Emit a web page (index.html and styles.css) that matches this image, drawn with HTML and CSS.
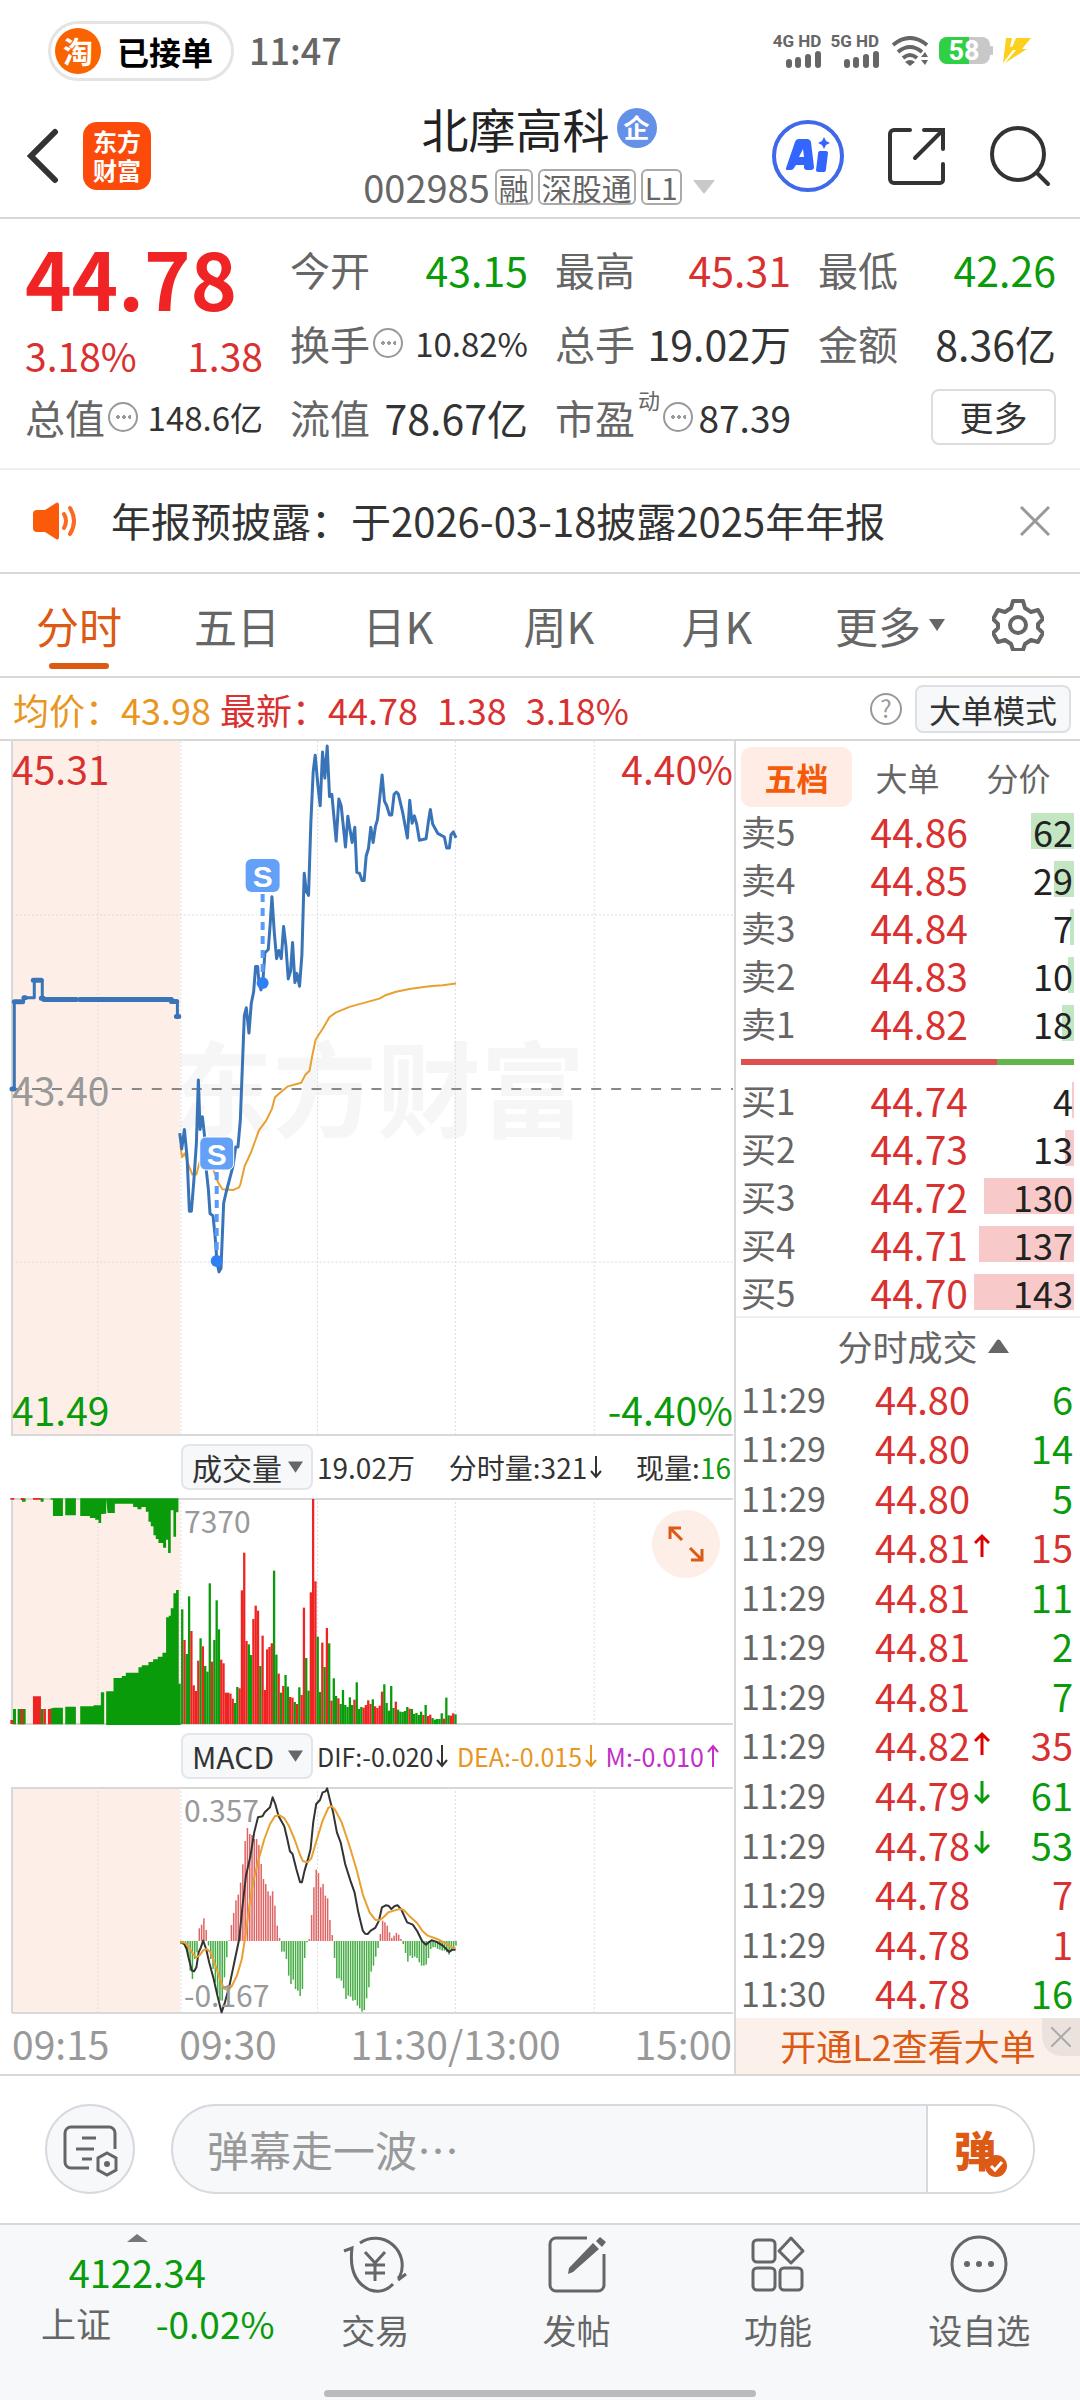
FILE: index.html
```html
<!DOCTYPE html>
<html lang="zh-CN">
<head>
<meta charset="utf-8">
<meta name="viewport" content="width=device-width, initial-scale=1">
<title>北摩高科 002985</title>
<link rel="stylesheet" href="styles.css">
</head>
<body>
<div class="app">

  <div class="status">
    <div class="pill"><span class="pill-logo">淘</span>已接单</div>
    <span class="clock">11:47</span>
    <div class="status-icons">
      <div class="net"><span>4G HD</span><svg width="36" height="17" viewBox="0 0 36 17"><path d="M4 14v-3M13 14v-5M23 14v-8M33 14v-11"/></svg></div>
      <div class="net"><span>5G HD</span><svg width="36" height="17" viewBox="0 0 36 17"><path d="M4 14v-3M13 14v-5M23 14v-8M33 14v-11"/></svg></div>
      <svg class="wifi" width="38" height="30" viewBox="0 0 38 30"><path d="M1 9Q18 -5 35 9M6 16Q18 6 30 16M11 22Q18 16 25 22" fill="none" stroke="#666" stroke-width="4"/><path d="M18 30l-5-4q5-4 10 0zM29 21h7l-3-5zM29 24h7l-3 5z" fill="#666"/></svg>
      <svg width="54" height="30" viewBox="0 0 54 30"><rect x="0" y="1" width="51" height="27" rx="8" fill="#c8c8c8"/><path d="M8 1h22v27H8a8 8 0 0 1-8-8V9a8 8 0 0 1 8-8z" fill="#2fd045"/><rect x="51" y="10" width="3" height="9" rx="1" fill="#c8c8c8"/><text x="25" y="24" text-anchor="middle" class="batt">58</text></svg>
      <svg width="30" height="28" viewBox="0 0 30 28"><path d="M4 1h6L8 10l6-1L1 26zM14 1h15L20 12h5L3 26l11-13-5 0z" fill="#fcd01c"/></svg>
    </div>
  </div>

  <header class="top">
    <div class="top-left">
      <button class="plain" aria-label="返回"><svg width="34" height="56" viewBox="0 0 34 56"><path d="M29 4L5 28l24 24" fill="none" stroke="#333" stroke-width="6" stroke-linecap="round"/></svg></button>
      <span class="brand">东方<br>财富</span>
    </div>
    <div class="top-mid">
      <h1>北摩高科<span class="corp">企</span></h1>
      <div class="code"><span>002985</span><span class="tag">融</span><span class="tag">深股通</span><span class="tag">L1</span><svg width="22" height="14" viewBox="0 0 22 14"><path d="M0 0h22L11 14z" fill="#c8c8c8"/></svg></div>
    </div>
    <div class="top-right">
      <button class="plain" aria-label="AI"><svg width="72" height="72" viewBox="0 0 72 72"><circle cx="36" cy="36" r="34" fill="#fff" stroke="#3f68ea" stroke-width="4"/><path d="M14 48L23 22q1-3 4-3h8q3 0 4 3l3 25q0 3-3 3h-4q-3 0-3-3v-2h-8l-2 3q-1 2-3 2h-3q-3 0-2-2zM27 37h5l-1-8z" fill="#3366ff" fill-rule="evenodd"/><path d="M48 31h6q2 0 2 2l-2 16q0 3-2 3h-6q-2 0-2-2l2-16q0-3 2-3z" fill="#3366ff"/><path d="M52 17l2 4 4 2-4 2-2 4-2-4-4-2 4-2z" fill="#3366ff"/></svg></button>
      <button class="plain" aria-label="分享"><svg width="60" height="60" viewBox="0 0 60 60"><path d="M23 4H7a4 4 0 0 0-4 4v45a4 4 0 0 0 4 4h46a3 3 0 0 0 3-3V38M37 4h19v19M56 4L28 32" fill="none" stroke="#333" stroke-width="4" stroke-linecap="round"/></svg></button>
      <button class="plain" aria-label="搜索"><svg width="62" height="62" viewBox="0 0 62 62"><circle cx="28" cy="29" r="26" fill="none" stroke="#333" stroke-width="4"/><path d="M47 48l11 11" stroke="#333" stroke-width="4" stroke-linecap="round"/></svg></button>
    </div>
  </header>

  <section class="quote">
    <div class="last">
      <strong>44.78</strong>
      <div class="pair up"><span>3.18%</span><span>1.38</span></div>
    </div>
    <div class="cell"><span class="k">今开</span><b class="down">43.15</b></div>
    <div class="cell"><span class="k">最高</span><b class="up">45.31</b></div>
    <div class="cell"><span class="k">最低</span><b class="down">42.26</b></div>
    <div class="cell"><span class="k">换手<i class="dots"></i></span><b class="s">10.82%</b></div>
    <div class="cell"><span class="k">总手</span><b>19.02万</b></div>
    <div class="cell"><span class="k">金额</span><b>8.36亿</b></div>
    <div class="cell"><span class="k">总值<i class="dots"></i></span><b class="s">148.6亿</b></div>
    <div class="cell"><span class="k">流值</span><b>78.67亿</b></div>
    <div class="cell"><span class="k">市盈<sup>动</sup><i class="dots"></i></span><b class="m">87.39</b></div>
    <div class="cell end"><button class="more">更多</button></div>
  </section>

  <section class="notice">
    <svg width="46" height="38" viewBox="0 0 46 38"><path d="M4 8h8L23 1q3-2 3 3v30q0 5-3 3l-11-7H4q-4 0-4-4V12q0-4 4-4z" fill="#fa5a0a"/><path d="M31 12q4 7 0 14M37 6q8 13 0 26" fill="none" stroke="#fa6a20" stroke-width="4" stroke-linecap="round"/></svg>
    <p>年报预披露：于2026-03-18披露2025年年报</p>
    <button class="plain" aria-label="关闭"><svg width="30" height="30" viewBox="0 0 30 30"><path d="M1 1l28 28M29 1L1 29" stroke="#999" stroke-width="3"/></svg></button>
  </section>

  <nav class="tabs">
    <button class="on">分时</button><button>五日</button><button>日K</button><button>周K</button><button>月K</button>
    <button>更多<svg width="16" height="12" viewBox="0 0 16 12"><path d="M0 0h16L8 12z" fill="#666"/></svg></button>
    <button aria-label="设置"><svg width="52" height="52" viewBox="0 0 52 52"><path d="M21 2h10l2 7 6 4 7-2 5 9-5 5v4l5 5-5 9-7-2-6 4-2 6H21l-2-6-6-4-7 2-5-9 5-5v-4l-5-5 5-9 7 2 6-4z" fill="none" stroke="#666" stroke-width="4" stroke-linejoin="round"/><circle cx="26" cy="26" r="8" fill="none" stroke="#666" stroke-width="4"/></svg></button>
  </nav>

  <div class="info">
    <span class="avg">均价：43.98</span>
    <span class="up">最新：44.78</span><span class="up">1.38</span><span class="up">3.18%</span>
    <button class="plain help" aria-label="帮助">?</button>
    <button class="mode">大单模式</button>
  </div>

  <main class="board">
    <div class="charts">
      <div class="chart price">
        <span class="mark">东方财富</span>
        <svg viewBox="0 0 735 695" preserveAspectRatio="none">
          <rect x="12" y="0" width="168" height="695" fill="#fdeee8"/>
          <path class="grid" d="M98 0v695M181 0v695M318 0v695M456 0v695M595 0v695M12 174h722M12 521h722"/>
          <path d="M12 0v695" stroke="#d8d8d8" stroke-width="2"/>
          <path d="M12 694h722" stroke="#d8d8d8" stroke-width="2"/>
          <path d="M12 348h722" stroke="#888" stroke-width="2" stroke-dasharray="10 10"/>
          <g class="lines" transform="translate(0 -11) scale(.3333 .4592)">
            <path class="gold" d="M542 905L547 930 555 922 565 945 578 968 590 968 600 940 615 930 640 955 655 985 668 1000 700 1002 718 996 722 990 735 950 755 918 778 872 800 850 817 825 826 800 838 792 865 776 905 768 918 750 930 742 938 710 948 675 958 663 970 650 990 625 1010 615 1050 603 1080 597 1140 585 1160 577 1190 570 1230 564 1290 558 1330 556 1370 552"/>
            <path class="blue" d="M36 782H43V592H68L74 583H103V545H127V587H515L518 592H533V624"/>
            <path class="blue thick" d="M36 782h6M43 592h25M72 583h4M100 545h24M124 584h6M132 587h60M196 587h34M240 587h75M318 587h197M515 591h16M530 624h7"/>
            <path class="blue" d="M540 878L546 912 554 870 562 930 569 1048 575 1048 582 985 590 900 596 762 601 870 608 842 614 880 620 960 626 1000 631 1053 640 1058 646 1100 652 1160 658 1180 664 1172 672 1030 680 1005 700 950 708 908 715 908 722 850 734 622 740 605 748 660 755 595 762 570 768 515 774 515 778 550 784 566 790 545 796 485 806 478 812 420 817 363 824 440 831 498 838 480 845 498 852 428 859 470 866 542 873 525 879 463 886 550 892 530 900 558 907 490 914 312 920 350 927 360 934 200 941 90 947 55 955 120 962 165 969 48 976 105 983 35 990 145 997 140 1010 242 1018 150 1025 165 1038 255 1045 188 1058 245 1066 212 1072 310 1080 312 1088 328 1094 328 1100 275 1107 258 1114 212 1121 245 1128 210 1134 195 1142 140 1148 98 1155 155 1162 165 1170 185 1177 185 1184 140 1191 135 1197 140 1210 180 1224 235 1231 153 1238 203 1245 187 1252 205 1260 240 1280 237 1287 200 1293 173 1300 205 1315 225 1335 233 1342 257 1350 257 1355 228 1362 222 1370 235"/>
          </g>
          <path d="M263 153v88M217 431v88" stroke="#5a9af8" stroke-width="4" stroke-dasharray="8 6"/>
          <circle cx="263" cy="242" r="6" fill="#2f80f5"/><circle cx="217" cy="520" r="6" fill="#2f80f5"/>
          <rect x="246" y="118" width="34" height="33" rx="6" fill="#63a0f7"/>
          <rect x="200" y="396" width="34" height="33" rx="6" fill="#63a0f7" stroke="#fff"/>
          <text class="s-mark" x="263" y="146" text-anchor="middle">S</text>
          <text class="s-mark" x="217" y="424" text-anchor="middle">S</text>
        </svg>
        <span class="lab tl up">45.31</span><span class="lab tr up">4.40%</span>
        <span class="lab ml">43.40</span>
        <span class="lab bl down">41.49</span><span class="lab br down">-4.40%</span>
      </div>

      <div class="sub-head">
        <button class="pick">成交量<svg width="15" height="12" viewBox="0 0 16 12"><path d="M0 0h16L8 12z" fill="#666"/></svg></button>
        <div class="vals"><span>19.02万</span><span>分时量:321<svg class="arr" width="12" height="24" viewBox="0 0 12 24"><path d="M6 1v21M1 16l5 6 5-6"/></svg></span><span>现量:<em class="down">16</em></span></div>
      </div>
      <div class="chart volume">
        <svg viewBox="0 0 735 227" preserveAspectRatio="none">
          <rect x="12" y="0" width="168" height="226" fill="#fdeee8"/>
          <path class="grid" d="M98 0v226M181 0v226M318 0v226M456 0v226M595 0v226"/>
          <path d="M12 1h722M12 226h722M12 0v226" stroke="#d8d8d8" stroke-width="2"/>
          <g transform="translate(0 -69) scale(.3333)">
            <path fill="#0a9b0a" d="M66 208h11v10H66zM122 208h9v10h-9zM152 208h37v53h-30v-49h-7zM196 208h32v51h-32zM241 208h78v46h-8v1h-7v27h-8v-10h-10v-5h-16v-6h-29zM319 208h217v42h-7v73h-8v-79h-8v128h-8v-40h-6v24h-9v-14h-14v-12h-8v-11h-7v-27h-8v-14h-7v-30h-8v-14h-13v7h-12v-7h-13v-10h-55v28h-22zM39 840h9v46h-9zM53 840h24v46H53zM122 840h8v46h-8zM152 838h7v-2h30v50h-37zM196 833h32v53h-32zM241 832h40v-3h22v-39h10v96h-72zM319 787h22v-40h25v-6h12v-10h38v-16h10v-6h20v-10h14v-8h14v-8h14v-12h11v-106h8v-5h6v-22h8v-45h8v-10h8v281h6v129H319z"/>
            <path fill="#ee2423" d="M31 207h12v5H31zM62 207h10v6H62zM99 207h24v5H99zM31 873h9v12h-9zM62 840h8v46h-8zM99 802h24v84H99zM130 840h8v46h-8zM144 840h10v46h-10z"/>
          </g>
          <g id="volume-bars" transform="translate(0 -69) scale(.3333)"></g>
        </svg>
        <span class="lab sm t181">7370</span>
        <button class="expand" aria-label="全屏"><svg width="36" height="36" viewBox="0 0 36 36"><path d="M14 14L3 3M2 13V2h11M22 22l11 11M34 23v11H23" fill="none" stroke="#dc5a14" stroke-width="3"/></svg></button>
      </div>

      <div class="sub-head">
        <button class="pick">MACD<svg width="15" height="12" viewBox="0 0 16 12"><path d="M0 0h16L8 12z" fill="#666"/></svg></button>
        <div class="vals macd-vals"><span>DIF:-0.020<svg class="arr" width="12" height="24" viewBox="0 0 12 24"><path d="M6 1v21M1 16l5 6 5-6"/></svg></span><span class="avg">DEA:-0.015<svg class="arr" width="12" height="24" viewBox="0 0 12 24"><path d="M6 1v21M1 16l5 6 5-6"/></svg></span><span class="mag">M:-0.010<svg class="arr" width="12" height="24" viewBox="0 0 12 24"><path d="M6 23V2M1 8l5-6 5 6"/></svg></span></div>
      </div>
      <div class="chart macd">
        <svg viewBox="0 0 735 227" preserveAspectRatio="none">
          <rect x="12" y="0" width="168" height="226" fill="#fdeee8"/>
          <path class="grid" d="M98 0v226M181 0v226M318 0v226M456 0v226M595 0v226"/>
          <path d="M12 1h722M12 226h722M12 0v226" stroke="#d8d8d8" stroke-width="2"/>
          <g id="macd-bars" transform="translate(150 -58) scale(.3762 .3333)"></g>
          <g class="lines" transform="translate(150 -58) scale(.3762 .3333)">
            <path class="ink" d="M82 638L92 645 98 660 104 690 112 725 118 727 124 715 130 670 136 655 142 635 150 660 158 700 170 750 180 800 191 850 200 820 212 770 225 700 238 630 246 540 256 440 268 380 278 310 288 265 300 262 306 250 320 235 327 205 334 225 343 262 358 292 366 330 373 367 380 375 390 420 400 460 405 460 412 425 420 395 428 360 435 280 443 225 453 213 460 190 468 187 472 178 480 215 488 250 498 310 508 340 520 405 534 455 545 490 555 550 567 605 573 614 580 615 588 605 600 597 610 575 618 535 628 529 635 530 643 540 652 531 660 529 670 543 685 580 700 587 712 607 725 637 735 647 750 634 762 638 780 650 797 669 805 662 814 662"/>
            <path class="gold" d="M80 638L95 642 105 655 115 675 124 685 132 680 142 664 152 660 160 668 172 700 185 745 197 778 208 784 218 772 232 740 245 690 256 610 265 530 275 460 290 390 305 330 320 285 333 262 345 258 358 268 370 290 385 330 400 378 408 397 420 400 430 388 445 330 460 275 475 237 483 232 492 240 510 278 530 345 550 420 568 500 585 550 600 572 610 574 622 565 635 550 650 545 665 540 675 542 690 560 712 583 725 605 740 620 765 630 790 645 805 655 814 657"/>
          </g>
        </svg>
        <span class="lab sm t181">0.357</span><span class="lab sm b181">-0.167</span>
      </div>
      <div class="axis"><span>09:15</span><span>09:30</span><span>11:30/13:00</span><span>15:00</span></div>
    </div>

    <aside class="side">
      <div class="side-tabs"><button class="on">五档</button><button>大单</button><button>分价</button></div>
      <table class="book sell">
        <tr><th>卖5</th><td>44.86</td><td class="q"><i style="width:43%"></i><span>62</span></td></tr>
        <tr><th>卖4</th><td>44.85</td><td class="q"><i style="width:20%"></i><span>29</span></td></tr>
        <tr><th>卖3</th><td>44.84</td><td class="q"><i style="width:4%"></i><span>7</span></td></tr>
        <tr><th>卖2</th><td>44.83</td><td class="q"><i style="width:6%"></i><span>10</span></td></tr>
        <tr><th>卖1</th><td>44.82</td><td class="q"><i style="width:12%"></i><span>18</span></td></tr>
      </table>
      <div class="ratio"><i style="width:77%"></i></div>
      <table class="book buy">
        <tr><th>买1</th><td>44.74</td><td class="q"><i style="width:2%"></i><span>4</span></td></tr>
        <tr><th>买2</th><td>44.73</td><td class="q"><i style="width:9%"></i><span>13</span></td></tr>
        <tr><th>买3</th><td>44.72</td><td class="q"><i style="width:90%"></i><span>130</span></td></tr>
        <tr><th>买4</th><td>44.71</td><td class="q"><i style="width:95%"></i><span>137</span></td></tr>
        <tr><th>买5</th><td>44.70</td><td class="q"><i style="width:100%"></i><span>143</span></td></tr>
      </table>
      <button class="deal-head">分时成交<svg width="21" height="14" viewBox="0 0 21 14"><path d="M0 14L9 1q1-1 3 0l9 13z" fill="#666"/></svg></button>
      <table class="deals">
        <tr><td>11:29</td><td>44.80</td><td></td><td class="down">6</td></tr>
        <tr><td>11:29</td><td>44.80</td><td></td><td class="down">14</td></tr>
        <tr><td>11:29</td><td>44.80</td><td></td><td class="down">5</td></tr>
        <tr><td>11:29</td><td>44.81</td><td><svg width="16" height="24" viewBox="0 0 16 24"><path d="M8 24V3M1 10l7-7 7 7" stroke="#d00"/></svg></td><td class="up">15</td></tr>
        <tr><td>11:29</td><td>44.81</td><td></td><td class="down">11</td></tr>
        <tr><td>11:29</td><td>44.81</td><td></td><td class="down">2</td></tr>
        <tr><td>11:29</td><td>44.81</td><td></td><td class="down">7</td></tr>
        <tr><td>11:29</td><td>44.82</td><td><svg width="16" height="24" viewBox="0 0 16 24"><path d="M8 24V3M1 10l7-7 7 7" stroke="#d00"/></svg></td><td class="up">35</td></tr>
        <tr><td>11:29</td><td>44.79</td><td><svg width="16" height="24" viewBox="0 0 16 24"><path d="M8 0v21M1 14l7 7 7-7" stroke="#0a9b0a"/></svg></td><td class="down">61</td></tr>
        <tr><td>11:29</td><td>44.78</td><td><svg width="16" height="24" viewBox="0 0 16 24"><path d="M8 0v21M1 14l7 7 7-7" stroke="#0a9b0a"/></svg></td><td class="down">53</td></tr>
        <tr><td>11:29</td><td>44.78</td><td></td><td class="up">7</td></tr>
        <tr><td>11:29</td><td>44.78</td><td></td><td class="up">1</td></tr>
        <tr><td>11:30</td><td>44.78</td><td></td><td class="down">16</td></tr>
      </table>
      <div class="l2"><a href="#l2">开通L2查看大单</a><button class="l2-x" aria-label="关闭"><svg width="20" height="20" viewBox="0 0 20 20"><path d="M0 0l20 20M20 0L0 20" stroke="#aaa" stroke-width="2"/></svg></button></div>
    </aside>
  </main>

  <form class="chat">
    <button type="button" class="round" aria-label="弹幕设置"><svg width="56" height="54" viewBox="0 0 56 54"><path d="M27 44H9a6 6 0 0 1-6-6V9a6 6 0 0 1 6-6h38a6 6 0 0 1 6 6v16" fill="none" stroke="#666" stroke-width="3"/><path d="M20 14h14M14 25h18M20 35h10" stroke="#666" stroke-width="3"/><path d="M45 29l9 5v12l-9 5-9-5V34z" fill="#f6f8fa" stroke="#666" stroke-width="3"/><circle cx="45" cy="40" r="3" fill="#666"/></svg></button>
    <div class="box"><input type="text" aria-label="弹幕" placeholder="弹幕走一波⋯"><button type="button" class="send">弹<svg width="24" height="24" viewBox="0 0 24 24"><circle cx="12" cy="12" r="11" fill="#dc5a14"/><path d="M7 12l4 4 7-8" fill="none" stroke="#fff" stroke-width="3"/></svg></button></div>
  </form>

  <footer class="bottom">
    <div class="index"><svg width="21" height="8" viewBox="0 0 21 8"><path d="M0 8L10 0l11 8z" fill="#777"/></svg><b class="down">4122.34</b><div><span>上证</span><span class="down">-0.02%</span></div></div>
    <button><svg width="66" height="60" viewBox="0 0 66 60"><g fill="none" stroke="#666" stroke-width="3"><path d="M18 9a27 27 0 0 1 40 33l-2 2M2 17l8-3q-4 32 18 42 14 4 23-6M56 46l8-6"/><path d="M23 18l10 11 10-11M33 29v18M23 31h20M23 39h20"/></g></svg>交易</button>
    <button><svg width="60" height="60" viewBox="0 0 60 60"><path d="M40 4H9a6 6 0 0 0-6 6v41a6 6 0 0 0 6 6h42a6 6 0 0 0 6-6V20" fill="none" stroke="#666" stroke-width="3"/><path d="M46 9l6 6-26 23-5 2 1-6zM49 7l4-4 6 5-4 5z" fill="#666"/></svg>发帖</button>
    <button><svg width="60" height="60" viewBox="0 0 60 60"><g fill="none" stroke="#666" stroke-width="3"><rect x="5" y="6" width="22" height="22" rx="4"/><rect x="5" y="34" width="22" height="22" rx="4"/><rect x="32" y="34" width="22" height="22" rx="4"/><path d="M43 4l12 13-12 12-12-12z" stroke-linejoin="round"/></g></svg>功能</button>
    <button><svg width="60" height="60" viewBox="0 0 60 60"><circle cx="30" cy="30" r="27" fill="none" stroke="#666" stroke-width="3"/><g fill="#666"><circle cx="18" cy="30" r="3"/><circle cx="30" cy="30" r="3"/><circle cx="42" cy="30" r="3"/></g></svg>设自选</button>
    <i class="home"></i>
  </footer>
</div>
<script src="script.js"></script>
</body>
</html>
```
FILE: styles.css
```css
* { box-sizing: border-box; }
body { margin: 0; background: #fff; color: #333; font-family: "Noto Sans CJK SC", sans-serif; }
button, input { font: inherit; color: inherit; background: none; border: 0; padding: 0; margin: 0; }
svg { display: block; flex: none; }
i, em { font-style: normal; }
h1, p { margin: 0; font-weight: 400; }
.plain { display: flex; }
.up { color: #d93030; }
.down { color: #0a9b0a; }
.avg { color: #e8961e; }
.mag { color: #c22fc8; }
.app { display: flex; flex-direction: column; min-height: 100vh; }

.status { display: flex; align-items: center; height: 101px; padding: 0 48px; gap: 15px; }
.pill { display: flex; align-items: center; gap: 16px; height: 60px; padding: 0 18px 0 4px; border: 3px solid #e4e4e4; border-radius: 30px; font-size: 32px; line-height: 48px; font-weight: 700; color: #000; }
.pill-logo { width: 46px; height: 46px; border-radius: 50%; background: #fa6400; color: #fff; font-size: 30px; line-height: 44px; text-align: center; }
.clock { font-size: 36px; line-height: 48px; color: #666; font-weight: 500; padding-bottom: 3px; }
.status-icons { display: flex; align-items: center; gap: 9px; margin-left: auto; }
.net { display: flex; flex-direction: column; align-items: flex-end; font: 700 17px/16px Roboto, sans-serif; color: #666; gap: 2px; }
.net path { stroke: #666; stroke-width: 6; stroke-linecap: round; }
.wifi { margin-left: 4px; }
.batt { font: 700 27px Roboto, sans-serif; fill: #fff; }

.top { display: grid; grid-template-columns: 1fr auto 1fr; align-items: center; height: 118px; padding: 0 28px 20px 26px; border-bottom: 2px solid #d8d8d8; }
.top-left, .top-right { display: flex; align-items: center; }
.top-left { gap: 23px; }
.top-right { justify-content: flex-end; gap: 43px; }
.brand { width: 68px; height: 68px; border-radius: 14px; background: #fc4a0a; color: #fff; font-size: 24px; line-height: 29px; font-weight: 700; text-align: center; padding-top: 4px; }
.top-mid { display: flex; flex-direction: column; align-items: center; }
.top-mid h1 { display: flex; align-items: center; gap: 7px; font-size: 47px; line-height: 54px; color: #222; font-weight: 400; margin-bottom: 8px; }
.corp { width: 40px; height: 40px; border-radius: 50%; background: #6590e8; color: #fff; font-size: 26px; line-height: 38px; font-weight: 700; text-align: center; }
.code { display: flex; align-items: center; gap: 5px; font-size: 38px; line-height: 48px; color: #666; }
.tag { height: 36px; border: 2px solid #aaa; border-radius: 6px; padding: 0 2px; font-size: 30px; line-height: 32px; }
.code svg { margin-left: 6px; }

.quote { display: grid; grid-template-columns: 237fr 237fr 235fr 237fr; column-gap: 27px; grid-auto-rows: 74px; height: 251px; padding: 13px 24px 0 25px; border-bottom: 2px solid #eee; }
.last { grid-row: span 2; }
.last strong { display: block; font-size: 79px; line-height: 90px; font-weight: 700; color: #f02424; }
.pair { display: flex; justify-content: space-between; font-size: 39px; line-height: 66px; }
.cell { display: flex; align-items: center; justify-content: space-between; white-space: nowrap; }
.cell b { font-size: 41px; font-weight: 400; }
.cell .s { font-size: 33px; }
.cell .m { font-size: 37px; }
.cell.end { justify-content: flex-end; }
.k { display: flex; align-items: center; gap: 3px; font-size: 40px; color: #666; }
.k sup { align-self: flex-start; font-size: 22px; line-height: 22px; }
.dots { display: flex; align-items: center; justify-content: center; width: 30px; height: 30px; border: 2px solid #999; border-radius: 50%; }
.dots::before { content: ""; width: 16px; height: 4px; background: radial-gradient(circle, #999 2px, transparent 2px) 0 0 / 6px 4px; }
.more { width: 125px; height: 56px; border: 2px solid #ddd; border-radius: 8px; font-size: 34px; line-height: 48px; }

.notice { display: flex; align-items: center; height: 104px; padding: 0 30px 0 33px; gap: 32px; border-bottom: 2px solid #d8d8d8; }
.notice p { flex: 1; font-size: 40px; line-height: 52px; padding-bottom: 2px; }

.tabs { display: grid; grid-template-columns: 158fr 158fr 164fr 158fr 158fr 188fr 96fr; height: 104px; border-bottom: 2px solid #d8d8d8; font-size: 43px; color: #666; }
.tabs button { position: relative; display: flex; align-items: center; justify-content: center; gap: 8px; }
.tabs button:last-child { justify-content: flex-end; padding-right: 36px; }
.tabs .on { color: #dc5a14; }
.tabs .on::after { content: ""; position: absolute; left: 49px; right: 49px; bottom: 7px; height: 6px; border-radius: 3px; background: #dc5a14; }

.info { display: flex; align-items: center; height: 63px; padding: 0 9px 0 13px; gap: 19px; font-size: 36px; line-height: 48px; border-bottom: 2px solid #d8d8d8; white-space: nowrap; }
.info .avg { margin-right: -10px; }
.help { margin-left: auto; justify-content: center; width: 32px; height: 32px; border: 2px solid #999; border-radius: 50%; font-size: 24px; line-height: 26px; color: #999; }
.mode { height: 48px; padding: 0 12px; margin-left: -6px; border: 2px solid #dcdfe4; border-radius: 8px; background: #f6f8fa; font-size: 32px; line-height: 40px; }

.board { display: grid; grid-template-columns: minmax(0, 1fr) 346px; border-bottom: 2px solid #d8d8d8; }
.charts { display: flex; flex-direction: column; }
.chart { position: relative; }
.chart > svg { position: relative; width: 100%; height: 100%; }
.price { height: 695px; }
.volume, .macd { height: 227px; }
.mark { position: absolute; left: 23%; top: 274px; font-size: 104px; line-height: 140px; font-weight: 700; color: #f6f6f6; }
.grid { stroke: #ddd; stroke-width: 1; stroke-dasharray: 2 2; fill: none; }
.lines path { fill: none; vector-effect: non-scaling-stroke; stroke-linejoin: round; }
.lines .blue { stroke: #3a74b8; stroke-width: 3; }
.lines .thick { stroke-width: 5; stroke-linecap: round; }
.lines .gold { stroke: #e8a030; stroke-width: 2; }
.lines .ink { stroke: #333; stroke-width: 2; }
.s-mark { font: 700 30px "Liberation Sans", sans-serif; fill: #fff; }
.lab { position: absolute; font-size: 39px; line-height: 40px; }
.tl, .ml, .bl { left: 12px; }
.tr, .br { right: 1px; }
.tl, .tr { top: 7px; }
.ml { top: 328px; color: #999; }
.bl, .br { bottom: 7px; }
.sm { font-size: 30px; color: #999; }
.t181 { left: 184px; top: 2px; }
.b181 { left: 184px; bottom: 0; }
.sub-head { display: flex; align-items: center; gap: 4px; height: 62px; padding: 0 3px 0 181px; white-space: nowrap; }
.pick { flex: none; display: flex; align-items: center; justify-content: space-between; width: 132px; height: 46px; padding: 0 8px 0 9px; border: 2px solid #e2e5ea; border-radius: 8px; background: #f6f8fa; font-size: 30px; line-height: 36px; }
.vals { flex: 1; display: flex; justify-content: space-between; font-size: 28px; line-height: 40px; }
.vals span { display: flex; align-items: center; gap: 3px; }
.vals em { margin-left: -3px; }
.macd-vals { font-size: 25px; padding-right: 12px; }
.arr path { fill: none; stroke: currentColor; stroke-width: 2; }
.expand { position: absolute; right: 14px; top: 12px; width: 68px; height: 68px; border-radius: 50%; background: #fdeee8; display: flex; align-items: center; justify-content: center; }
.axis { display: grid; grid-template-columns: 168fr 172fr 230fr 153fr; height: 60px; padding: 0 2px 0 12px; font-size: 39px; line-height: 58px; color: #999; white-space: nowrap; }
.axis span:last-child { text-align: right; }

.side { display: flex; flex-direction: column; border-left: 2px solid #d8d8d8; }
.side-tabs { display: grid; grid-template-columns: 111px 111px 111px; height: 60px; margin: 6px 0 0 5px; font-size: 32px; color: #666; }
.side-tabs .on { background: #ffece4; border-radius: 10px; color: #f55a0a; font-weight: 700; }
table { border-collapse: collapse; }
td, th { padding: 0; font-weight: 400; }
.book { width: 333px; margin-left: 5px; table-layout: fixed; line-height: 48px; }
.book tr { height: 48px; }
.book th { text-align: left; font-size: 35px; color: #666; width: 90px; }
.book td { text-align: right; font-size: 39px; color: #d93030; padding-right: 6px; }
.book .q { position: relative; width: 100px; padding-right: 1px; font-size: 36px; color: #222; }
.q span { position: relative; }
.q i { position: absolute; right: 0; top: 6px; height: 36px; }
.sell i { background: #c2e5c2; }
.buy i { background: #f8c9c9; }
.ratio { height: 6px; margin: 12px 6px 11px 5px; background: #62b54a; }
.ratio i { display: block; height: 6px; background: #de4f4f; }
.deal-head { display: flex; align-items: center; justify-content: center; gap: 10px; height: 58px; border-top: 2px solid #eee; font-size: 35px; line-height: 54px; color: #666; padding-left: 30px; }
.deals { flex: 1; width: 333px; margin-left: 5px; line-height: 48px; table-layout: fixed; }
.deals tr { height: 49px; }
.deals td { font-size: 38px; text-align: right; }
.deals td:first-child { width: 110px; font-size: 34px; color: #666; text-align: left; }
.deals td:nth-child(2) { color: #d93030; }
.deals td:nth-child(3) { width: 24px; padding-left: 4px; }
.deals td:last-child { width: 80px; padding-right: 1px; }
.deals path { fill: none; stroke-width: 3; }
.deals svg { margin-bottom: 4px; }
.l2 { position: relative; height: 56px; background: #fcf1ea; text-align: center; font-size: 36px; line-height: 54px; }
.l2 a { color: #dc5a14; text-decoration: none; }
.l2-x { position: absolute; right: 0; top: 0; width: 38px; height: 38px; background: #ece2dd; border-bottom-left-radius: 20px; display: flex; align-items: center; justify-content: center; }

.chat { display: flex; align-items: center; gap: 36px; height: 147px; padding: 0 45px 2px; }
.round { width: 90px; height: 90px; border: 2px solid #d6d9de; border-radius: 50%; background: #f6f8fa; display: flex; align-items: center; justify-content: center; padding-top: 4px; }
.box { flex: 1; display: flex; height: 90px; border: 2px solid #d6d9de; border-radius: 45px; overflow: hidden; background: #f6f8fa; }
.box input { flex: 1; min-width: 0; padding-left: 34px; font-size: 42px; outline: 0; }
.box input::placeholder { color: #999; opacity: 1; }
.send { position: relative; width: 107px; border-left: 2px solid #d6d9de; background: #fff; color: #dc5a14; font-size: 42px; font-weight: 900; text-align: left; padding-left: 26px; line-height: 76px; }
.send svg { position: absolute; left: 56px; top: 48px; }

.bottom { position: relative; flex: 1; display: grid; grid-template-columns: 274fr 201fr 201fr 201fr 201fr; height: 177px; border-top: 2px solid #d8d8d8; background: #f6f8fa; color: #666; }
.bottom button { display: flex; flex-direction: column; align-items: center; gap: 14px; padding-top: 9px; font-size: 34px; line-height: 44px; }
.index { display: flex; flex-direction: column; align-items: center; padding-top: 9px; }
.index b { font-size: 38px; line-height: 56px; font-weight: 400; margin-top: 2px; }
.index div { display: flex; justify-content: space-between; align-self: stretch; padding: 0 0 0 41px; font-size: 35px; line-height: 46px; }
.index div .down { font-size: 37px; }
.home { position: absolute; left: 30%; right: 30%; bottom: 3px; height: 7px; border-radius: 4px; background: #bbbbbd; }
```
FILE: script.js
```js
const GREEN = '#0a9b0a', RED = '#ee2423';

// One entry per minute: r = rising, g = falling, number = top edge of the bar.
const volume = ('g541 r633 g675 g502 r606 r769 r786 r695 g628 r652 g711 g728 g463 r698 g633 g514 g601 r692 r703 r791 ' +
  'r791 r794 r809 g822 g774 r778 r484 r371 r636 g646 g678 r570 r530 r545 g711 r620 r783 r661 r654 r643 g425 g677 r734 g791 ' +
  'r771 g738 g773 r804 r806 g819 r825 g775 r798 r536 g687 g785 r490 r210 r457 g623 g789 r641 g714 r597 g643 r815 g748 g801 ' +
  'r808 g825 g783 g828 g834 g805 g828 r812 g760 g840 g834 r836 r828 r814 r825 g811 r832 r837 r830 r788 g766 g822 g845 g771 ' +
  'g837 r818 g842 g848 g849 g846 g834 r839 g840 g855 g852 g858 g848 r858 g828 r861 r857 g867 g872 g870 g870 g853 r869 g806 ' +
  'g859 r860 r853 g856').split(' ');
document.getElementById('volume-bars').innerHTML = volume.map((v, i) => {
  const y = +v.slice(1);
  return `<rect x="${544 + i * 6.9}" y="${y}" width="6.9" height="${885 - y}" fill="${v[0] === 'g' ? GREEN : RED}"/>`;
}).join('');

const ZERO = 636;
const macd = [645, 648, 655, 680, 725, 750, 690, 670, 598, 587, 568, 603, 650, 690, 720, 760, 795, 815, 815, 745, 685, 634,
  588, 552, 514, 497, 461, 406, 336, 297, 315, 318, 330, 330, 348, 405, 450, 465, 487, 500, 487, 530, 590, 627, 668, 668, 690,
  740, 765, 752, 780, 785, 801, 780, 687, 640, 630, 558, 475, 422, 432, 475, 465, 500, 508, 573, 618, 687, 748, 748, 755, 778,
  810, 800, 803, 815, 813, 830, 838, 848, 843, 808, 775, 728, 710, 683, 657, 615, 575, 580, 590, 610, 627, 620, 612, 617, 630,
  645, 672, 698, 680, 687, 683, 687, 700, 710, 710, 707, 687, 660, 655, 655, 660, 662, 665, 665, 670, 677, 665, 660, 650];
document.getElementById('macd-bars').innerHTML = macd.map((v, i) =>
  `<rect x="${81 + i * 6.1}" y="${Math.min(v, ZERO)}" width="4" height="${Math.abs(v - ZERO)}" fill="${v < ZERO ? '#e06464' : '#46ac46'}"/>`
).join('');
```
